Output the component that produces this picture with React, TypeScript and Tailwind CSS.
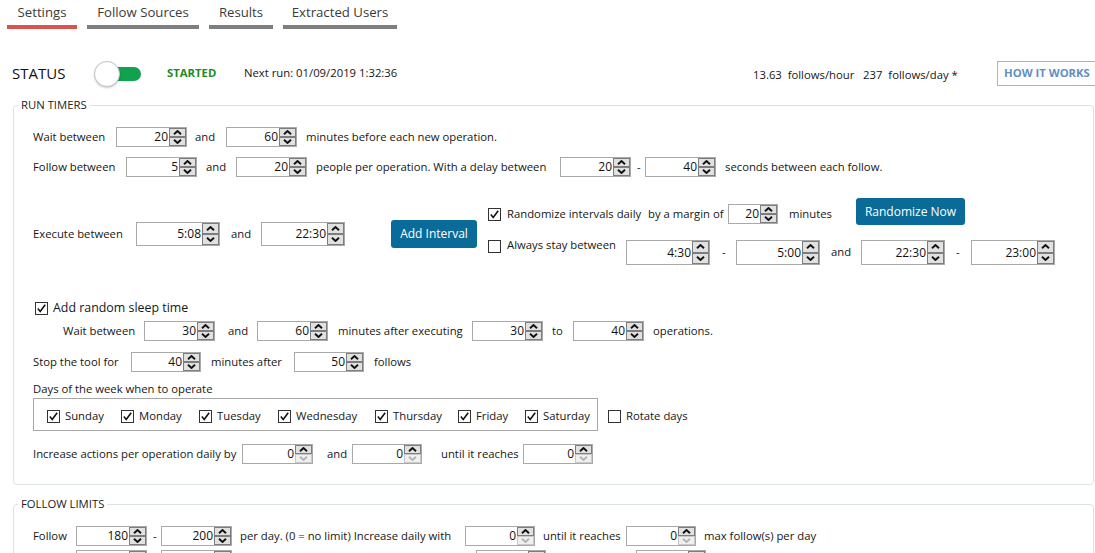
import React from "react";

function Arrow({ up, off }: { up?: boolean; off?: boolean }) {
  return (
    <svg width="9" height="5" viewBox="0 0 9 5" className="block">
      <polyline
        points={up ? "1,4.2 4.5,1 8,4.2" : "1,0.8 4.5,4 8,0.8"}
        fill="none"
        stroke={off ? "#b4b4b4" : "#111"}
        strokeWidth="1.9"
      />
    </svg>
  );
}

function Spin({
  v,
  size = "w-[71px] h-[20px]",
  dis = false,
}: {
  v: string;
  size?: string;
  dis?: boolean;
}) {
  return (
    <div className={`flex shrink-0 border border-[#a9a9a9] bg-white ${size}`}>
      <div className="flex flex-1 items-center justify-end pr-[1px] text-[12px] leading-none text-[#111]">
        {v}
      </div>
      <div className="flex w-[17px] flex-col">
        <div className="flex flex-1 items-center justify-center border border-[#7d7d7d] bg-[#e1e1e1]">
          <Arrow up />
        </div>
        <div
          className={
            dis
              ? "flex flex-1 items-center justify-center border border-[#c9c9c9] bg-[#f0f0f0]"
              : "flex flex-1 items-center justify-center border border-[#7d7d7d] bg-[#e1e1e1]"
          }
        >
          <Arrow off={dis} />
        </div>
      </div>
    </div>
  );
}

function Check({ on }: { on?: boolean }) {
  return (
    <div className="flex h-[13px] w-[13px] shrink-0 items-center justify-center border border-[#333] bg-white">
      {on && (
        <svg width="11" height="11" viewBox="0 0 11 11">
          <polyline points="1.8,5.6 4.2,8.4 9.2,1.8" fill="none" stroke="#111" strokeWidth="1.6" />
        </svg>
      )}
    </div>
  );
}

function Day({ label, w }: { label: string; w: string }) {
  return (
    <div className={`flex items-center ${w}`}>
      <Check on />
      <span className="ml-[5px]">{label}</span>
    </div>
  );
}

function Tab({ label, w, active }: { label: string; w: string; active?: boolean }) {
  return (
    <div className={`flex flex-col items-center pt-[3px] ${w}`}>
      <div className="h-[19px] text-[13.2px] leading-[19px] text-[#3b3b3b]">{label}</div>
      <div className={active ? "mt-[3px] h-[4px] w-full bg-[#d9534f]" : "mt-[3px] h-[4px] w-full bg-[#7f7f7f]"} />
    </div>
  );
}

export default function App() {
  return (
    <div className="h-[553px] w-[1095px] overflow-hidden whitespace-nowrap bg-white font-['Segoe_UI','Open_Sans',sans-serif] text-[11.3px] text-[#161616]">
      {/* tab strip */}
      <div className="flex gap-[10px] pl-[7px]">
        <Tab label="Settings" w="w-[70px]" active />
        <Tab label="Follow Sources" w="w-[112px]" />
        <Tab label="Results" w="w-[64px]" />
        <Tab label="Extracted Users" w="w-[114px]" />
      </div>

      {/* status bar */}
      <div className="mt-[31px] flex h-[27px] w-[1120px] items-center pl-[12px]">
        <div className="flex w-[741px] items-center">
          <div className="w-[82px] text-[15px] leading-none text-[#111]">STATUS</div>
          <div className="relative h-[26px] w-[47px] shrink-0">
            <div className="absolute right-0 top-[6px] h-[14px] w-[32px] rounded-full bg-[#12a14f]" />
            <div className="absolute left-0 top-0 h-[26px] w-[26px] rounded-full border border-[#c4c4c4] bg-white shadow-[0_1px_2px_rgba(0,0,0,0.2)]" />
          </div>
          <div className="ml-[26px] w-[77px] font-bold text-[#228b22]">STARTED</div>
          <div>Next run: 01/09/2019 1:32:36</div>
        </div>
        <div className="mt-[4px] w-[244px] whitespace-pre">13.63  follows/hour   237  follows/day *</div>
        <div className="flex h-[25px] w-[110px] shrink-0 items-center border border-[#93b8dc] pl-[6px] font-bold text-[#5e8fc6]">
          HOW IT WORKS
        </div>
      </div>

      {/* run timers */}
      <fieldset className="ml-[13px] mt-[10px] w-[1081px] rounded-[4px] border border-[#dbe1e8] pb-[20px]">
        <legend className="ml-[4px] px-[3px] leading-[16px] text-[#222]">RUN TIMERS</legend>
        <div className="pl-[19px]">
          <div className="mt-[14px] flex h-[20px] items-center">
            <div className="w-[83px]">Wait between</div>
            <Spin v="20" />
            <div className="ml-[8px] w-[31px]">and</div>
            <Spin v="60" />
            <div className="ml-[9px]">minutes before each new operation.</div>
          </div>

          <div className="mt-[10px] flex h-[20px] items-center">
            <div className="w-[93px]">Follow between</div>
            <Spin v="5" />
            <div className="ml-[9px] w-[30px]">and</div>
            <Spin v="20" />
            <div className="ml-[9px] w-[244px]">people per operation. With a delay between</div>
            <Spin v="20" />
            <div className="ml-[6px] w-[8px]">-</div>
            <Spin v="40" />
            <div className="ml-[9px]">seconds between each follow.</div>
          </div>

          <div className="mt-[21px] flex items-start">
            <div className="mt-[22px] flex h-[28px] items-center">
              <div className="w-[103px]">Execute between</div>
              <Spin v="5:08" size="w-[84px] h-[24px]" />
              <div className="ml-[11px] w-[30px]">and</div>
              <Spin v="22:30" size="w-[84px] h-[24px]" />
              <div className="ml-[46px] flex h-[28px] w-[86px] items-center justify-center rounded-[3px] bg-[#0b6b98] text-[12px] text-white">
                Add Interval
              </div>
            </div>

            <div className="ml-[11px] flex flex-col">
              <div className="flex h-[27px] items-start">
                <div className="mt-[10px]">
                  <Check on />
                </div>
                <div className="ml-[6px] mt-[8px] w-[141px] leading-[16px]">Randomize intervals daily</div>
                <div className="mt-[8px] w-[80px] leading-[16px]">by a margin of</div>
                <div className="mt-[6px]">
                  <Spin v="20" size="w-[50px] h-[20px]" />
                </div>
                <div className="ml-[11px] mt-[8px] w-[67px] leading-[16px]">minutes</div>
                <div className="flex h-[27px] w-[109px] items-center justify-center rounded-[3px] bg-[#0b6b98] text-[12px] text-white">
                  Randomize Now
                </div>
              </div>

              <div className="mt-[15px] flex items-start">
                <Check />
                <div className="ml-[6px] mt-[-3px] w-[119px] leading-[16px]">Always stay between</div>
                <Spin v="4:30" size="w-[84px] h-[25px]" />
                <div className="ml-[12px] flex h-[25px] w-[14px] items-center">-</div>
                <Spin v="5:00" size="w-[84px] h-[25px]" />
                <div className="ml-[11px] flex h-[25px] w-[30px] items-center">and</div>
                <Spin v="22:30" size="w-[84px] h-[25px]" />
                <div className="ml-[11px] flex h-[25px] w-[15px] items-center">-</div>
                <Spin v="23:00" size="w-[84px] h-[25px]" />
              </div>
            </div>
          </div>

          <div className="mt-[37px] flex h-[13px] items-center pl-[2px]">
            <Check on />
            <div className="ml-[5px] text-[12.4px]">Add random sleep time</div>
          </div>

          <div className="mt-[6px] flex h-[20px] items-center pl-[30px]">
            <div className="w-[81px]">Wait between</div>
            <Spin v="30" />
            <div className="ml-[13px] w-[29px]">and</div>
            <Spin v="60" />
            <div className="ml-[10px] w-[134px]">minutes after executing</div>
            <Spin v="30" />
            <div className="ml-[9px] w-[21px]">to</div>
            <Spin v="40" />
            <div className="ml-[9px]">operations.</div>
          </div>

          <div className="mt-[11px] flex h-[20px] items-center">
            <div className="w-[98px]">Stop the tool for</div>
            <Spin v="40" size="w-[70px] h-[20px]" />
            <div className="ml-[10px] w-[83px]">minutes after</div>
            <Spin v="50" size="w-[70px] h-[20px]" />
            <div className="ml-[10px]">follows</div>
          </div>

          <div className="mt-[9px] leading-[16px]">Days of the week when to operate</div>

          <div className="mt-[1px] flex items-center">
            <div className="flex h-[33px] w-[565px] items-center border border-[#a7a7a7] pl-[13px] pt-[3px]">
              <Day label="Sunday" w="w-[74px]" />
              <Day label="Monday" w="w-[78px]" />
              <Day label="Tuesday" w="w-[79px]" />
              <Day label="Wednesday" w="w-[97px]" />
              <Day label="Thursday" w="w-[83px]" />
              <Day label="Friday" w="w-[67px]" />
              <Day label="Saturday" w="w-[70px]" />
            </div>
            <div className="ml-[10px] flex items-center pt-[3px]">
              <Check />
              <span className="ml-[5px]">Rotate days</span>
            </div>
          </div>

          <div className="mt-[13px] flex h-[20px] items-center">
            <div className="w-[209px]">Increase actions per operation daily by</div>
            <Spin v="0" dis />
            <div className="ml-[14px] w-[25px]">and</div>
            <Spin v="0" size="w-[70px] h-[20px]" dis />
            <div className="ml-[19px] w-[82px]">until it reaches</div>
            <Spin v="0" size="w-[70px] h-[20px]" dis />
          </div>
        </div>
      </fieldset>

      {/* follow limits */}
      <fieldset className="ml-[13px] mt-[11px] w-[1081px] rounded-[4px] border border-[#dbe1e8] pb-[20px]">
        <legend className="ml-[4px] px-[3px] leading-[16px] text-[#222]">FOLLOW LIMITS</legend>
        <div className="pl-[19px]">
          <div className="mt-[14px] flex h-[20px] items-center">
            <div className="w-[43px]">Follow</div>
            <Spin v="180" />
            <div className="ml-[6px] w-[8px]">-</div>
            <Spin v="200" />
            <div className="ml-[8px] w-[225px]">per day. (0 = no limit) Increase daily with</div>
            <Spin v="0" size="w-[70px] h-[20px]" dis />
            <div className="ml-[8px] w-[83px]">until it reaches</div>
            <Spin v="0" size="w-[70px] h-[20px]" dis />
            <div className="ml-[8px]">max follow(s) per day</div>
          </div>
          <div className="mt-[4px] flex h-[20px] items-center">
            <div className="w-[43px]" />
            <Spin v="" />
            <div className="ml-[6px] w-[8px]" />
            <Spin v="" />
            <div className="w-[244px]" />
            <Spin v="" size="w-[70px] h-[20px]" dis />
            <div className="w-[90px]" />
            <Spin v="" size="w-[70px] h-[20px]" dis />
          </div>
        </div>
      </fieldset>
    </div>
  );
}
